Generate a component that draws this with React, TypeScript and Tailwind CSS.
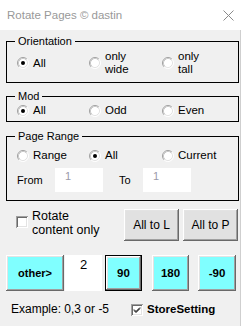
import React from "react"

const bevel =
  "shadow-[inset_-1px_-1px_#696969,inset_1px_1px_#ffffff,inset_-2px_-2px_#a0a0a0,inset_2px_2px_#e3e3e3]"

function Radio({ checked = false }: { checked?: boolean }) {
  return (
    <svg width="12" height="12" viewBox="0 0 12 12" className="shrink-0">
      <circle cx="6" cy="6" r="5" fill="#ffffff" />
      <path d="M2.11 9.89 A5.5 5.5 0 0 1 9.89 2.11" fill="none" stroke="#a0a0a0" strokeWidth="1" />
      <path d="M9.89 2.11 A5.5 5.5 0 0 1 2.11 9.89" fill="none" stroke="#ffffff" strokeWidth="1" />
      <path d="M2.82 9.18 A4.5 4.5 0 0 1 9.18 2.82" fill="none" stroke="#c8c8c8" strokeWidth="1" />
      <path d="M9.18 2.82 A4.5 4.5 0 0 1 2.82 9.18" fill="none" stroke="#e3e3e3" strokeWidth="1" />
      {checked && <circle cx="6" cy="6" r="2" fill="#000000" />}
    </svg>
  )
}

function Check({ checked = false }: { checked?: boolean }) {
  return (
    <span className="relative block w-[12px] h-[12px] shrink-0 bg-white shadow-[inset_1px_1px_#a0a0a0,inset_-1px_-1px_#ffffff,inset_2px_2px_#696969,inset_-2px_-2px_#e3e3e3]">
      {checked && (
        <svg width="12" height="12" viewBox="0 0 12 12" className="absolute left-0 top-0">
          <path d="M3 5.5 L5 7.5 L9 3.5 M3 6.5 L5 8.5 L9 4.5" fill="none" stroke="#000" strokeWidth="1" />
        </svg>
      )}
    </span>
  )
}

function Option({ checked, children }: { checked?: boolean; children: React.ReactNode }) {
  return (
    <div className="flex items-center gap-[4px]">
      <Radio checked={checked} />
      <span>{children}</span>
    </div>
  )
}

function Group({ title, className, children }: { title: string; className?: string; children: React.ReactNode }) {
  return (
    <fieldset className={`w-[233px] border border-black pl-[8px] ${className ?? ""}`}>
      <legend className="px-[3px] leading-[13px]">{title}</legend>
      {children}
    </fieldset>
  )
}

export default function App() {
  return (
    <div className="w-[245px] h-[326px] bg-white overflow-hidden text-[11px] leading-[13px] text-black font-['Liberation_Sans',Arial,sans-serif]">
      <div className="h-[30px] flex items-center justify-between pl-[7px] pr-[11px]">
        <span className="text-[11.5px] text-[#999999]">Rotate Pages © dastin</span>
        <svg width="11" height="11" viewBox="0 0 11 11">
          <path d="M0.5 0.5 L10.5 10.5 M10.5 0.5 L0.5 10.5" stroke="#8a8a8a" strokeWidth="1" />
        </svg>
      </div>

      <div className="w-[241px] h-[296px] bg-[#f0f0f0] border-r border-[#cfcfcf] pl-[6px] pt-[5px]">
        <Group title="Orientation" className="pb-[6px]">
          <div className="grid grid-cols-[72px_73px_1fr] items-center pl-[2px] pt-[2px] text-[11.5px]">
            <Option checked>All</Option>
            <Option>
              only
              <br />
              wide
            </Option>
            <Option>
              only
              <br />
              tall
            </Option>
          </div>
        </Group>

        <Group title="Mod" className="mt-[7px] pb-[4px]">
          <div className="grid grid-cols-[72px_73px_1fr] items-center pl-[2px] pt-[1px] text-[11.5px]">
            <Option checked>All</Option>
            <Option>Odd</Option>
            <Option>Even</Option>
          </div>
        </Group>

        <Group title="Page Range" className="mt-[8px] pb-[8px]">
          <div className="grid grid-cols-[72px_73px_1fr] items-center pl-[2px] pt-[6px] text-[11.5px]">
            <Option>Range</Option>
            <Option checked>All</Option>
            <Option>Current</Option>
          </div>
          <div className="flex items-center pl-[2px] mt-[6px]">
            <span className="w-[38px]">From</span>
            <div className="w-[48px] h-[24px] bg-white pl-[10px] pt-[2px] text-[#9a9aa8]">1</div>
            <span className="w-[40px] pl-[16px]">To</span>
            <div className="w-[48px] h-[24px] bg-white pl-[10px] pt-[2px] text-[#9a9aa8]">1</div>
          </div>
        </Group>

        <div className="flex items-start mt-[8px]">
          <div className="w-[118px] flex items-start gap-[4px] pl-[10px]">
            <div className="mt-[7px]">
              <Check />
            </div>
            <span className="text-[12.5px] leading-[14px]">
              Rotate
              <br />
              content only
            </span>
          </div>
          <button className={`w-[55px] h-[32px] bg-[#e1e1e1] text-[12px] ${bevel}`}>All to L</button>
          <button className={`w-[55px] h-[32px] ml-[4px] bg-[#e1e1e1] text-[12px] ${bevel}`}>All to P</button>
        </div>

        <div className="flex items-stretch mt-[14px] h-[36px] font-bold text-[11.5px]">
          <button className={`w-[58px] bg-[#80ffff] text-[11px] ${bevel}`}>other&gt;</button>
          <div className="w-[37px] ml-[1px] bg-white text-center font-normal text-[13px] pt-[3px]">2</div>
          <div className="w-[37px] ml-[3px] border border-black">
            <button className={`w-full h-full bg-[#80ffff] ${bevel}`}>90</button>
          </div>
          <button className={`w-[37px] ml-[10px] bg-[#80ffff] ${bevel}`}>180</button>
          <button className={`w-[38px] ml-[9px] bg-[#80ffff] ${bevel}`}>-90</button>
        </div>

        <div className="flex items-center mt-[12px] pl-[5px]">
          <span className="w-[120px] text-[12px]">Example: 0,3 or -5</span>
          <Check checked />
          <span className="ml-[4px] font-bold text-[11.5px]">StoreSetting</span>
        </div>
      </div>
    </div>
  )
}
